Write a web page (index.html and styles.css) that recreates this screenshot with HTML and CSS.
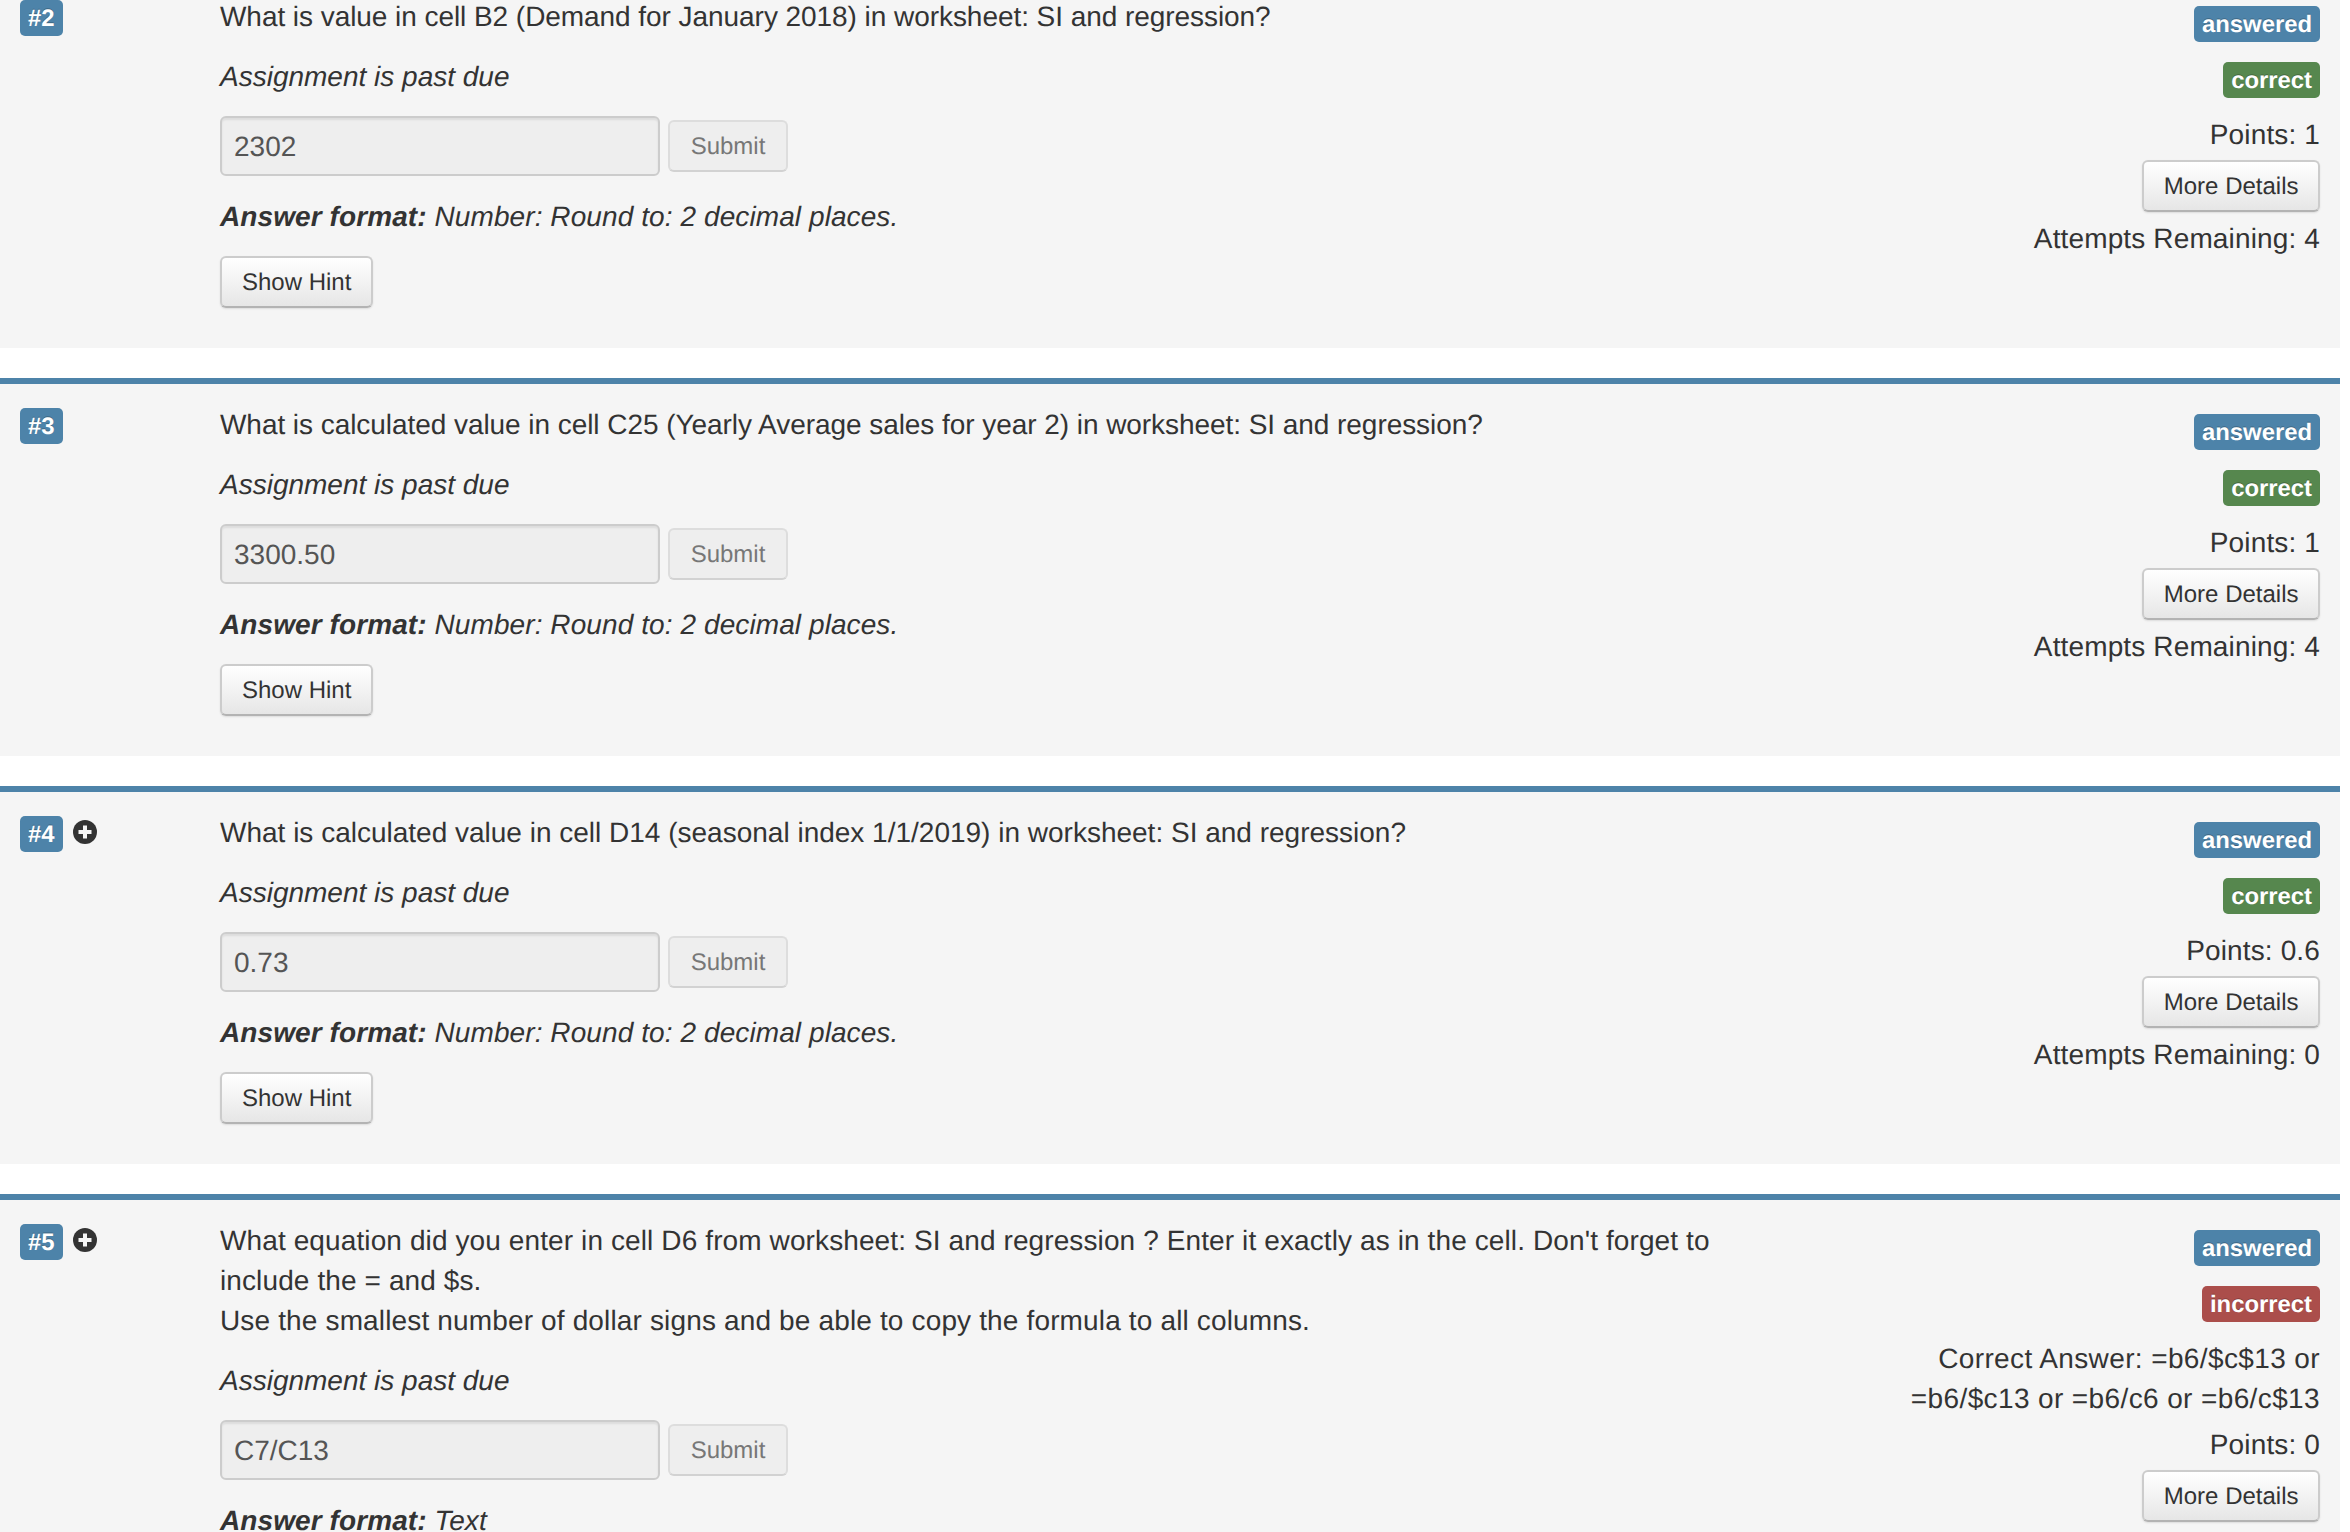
FILE: index.html
```html
<!DOCTYPE html>
<html lang="en">
<head>
<meta charset="utf-8">
<title>Assignment questions</title>
<link rel="stylesheet" href="styles.css">
</head>
<body>
<main class="list">

<section class="q">
  <div class="num"><span class="tag tag-blue">#2</span></div>
  <div class="body">
    <div class="text tight">What is value in cell B2 (Demand for January 2018) in worksheet: SI and regression?</div>
    <div class="due">Assignment is past due</div>
    <div class="answer"><input class="field" type="text" value="2302" disabled><button class="btn btn-off" disabled>Submit</button></div>
    <div class="format"><b>Answer format:</b> Number: Round to: 2 decimal places.</div>
    <div><button class="btn">Show Hint</button></div>
  </div>
  <aside class="side">
    <span class="tag tag-blue">answered</span>
    <span class="tag tag-green">correct</span>
    <div class="line first">Points: 1</div>
    <button class="btn">More Details</button>
    <div class="line">Attempts Remaining: 4</div>
  </aside>
</section>

<section class="q">
  <div class="num"><span class="tag tag-blue">#3</span></div>
  <div class="body">
    <div class="text tight">What is calculated value in cell C25 (Yearly Average sales for year 2) in worksheet: SI and regression?</div>
    <div class="due">Assignment is past due</div>
    <div class="answer"><input class="field" type="text" value="3300.50" disabled><button class="btn btn-off" disabled>Submit</button></div>
    <div class="format"><b>Answer format:</b> Number: Round to: 2 decimal places.</div>
    <div><button class="btn">Show Hint</button></div>
  </div>
  <aside class="side">
    <span class="tag tag-blue">answered</span>
    <span class="tag tag-green">correct</span>
    <div class="line first">Points: 1</div>
    <button class="btn">More Details</button>
    <div class="line">Attempts Remaining: 4</div>
  </aside>
</section>

<section class="q">
  <div class="num"><span class="tag tag-blue">#4</span><svg class="plus" viewBox="0 0 24 24"><circle cx="12" cy="12" r="12"/><path d="M10 5.500h4V10h4.500v4H14v4.500h-4V14H5.500v-4H10z"/></svg></div>
  <div class="body">
    <div class="text">What is calculated value in cell D14 (seasonal index 1/1/2019) in worksheet: SI and regression?</div>
    <div class="due">Assignment is past due</div>
    <div class="answer"><input class="field" type="text" value="0.73" disabled><button class="btn btn-off" disabled>Submit</button></div>
    <div class="format"><b>Answer format:</b> Number: Round to: 2 decimal places.</div>
    <div><button class="btn">Show Hint</button></div>
  </div>
  <aside class="side">
    <span class="tag tag-blue">answered</span>
    <span class="tag tag-green">correct</span>
    <div class="line first">Points: 0.6</div>
    <button class="btn">More Details</button>
    <div class="line">Attempts Remaining: 0</div>
  </aside>
</section>

<section class="q">
  <div class="num"><span class="tag tag-blue">#5</span><svg class="plus" viewBox="0 0 24 24"><circle cx="12" cy="12" r="12"/><path d="M10 5.500h4V10h4.500v4H14v4.500h-4V14H5.500v-4H10z"/></svg></div>
  <div class="body">
    <div class="text wide">What equation did you enter in cell D6 from worksheet: SI and regression ? Enter it exactly as in the cell. Don't forget to include the = and $s.<br><span class="wider">Use the smallest number of dollar signs and be able to copy the formula to all columns.</span></div>
    <div class="due">Assignment is past due</div>
    <div class="answer"><input class="field" type="text" value="C7/C13" disabled><button class="btn btn-off" disabled>Submit</button></div>
    <div class="format"><b>Answer format:</b> Text</div>
  </div>
  <aside class="side">
    <span class="tag tag-blue">answered</span>
    <span class="tag tag-red">incorrect</span>
    <div class="line first formula">Correct Answer: =b6/$c$13 or =b6/$c13 or =b6/c6 or =b6/c$13</div>
    <div class="line">Points: 0</div>
    <button class="btn">More Details</button>
  </aside>
</section>

</main>
</body>
</html>
```
FILE: styles.css
```css
html, body {
  margin: 0;
  height: 1532px;
  overflow: hidden;
  background: #fff;
}
body {
  font-family: "Liberation Sans", Arial, sans-serif;
  font-size: 28px;
  line-height: 40px;
  color: #333;
  text-rendering: geometricPrecision;
}
.list {
  width: 2340px;
  margin-top: -24px;
}
.q {
  display: grid;
  grid-template-columns: 220px 1660px 1fr;
  background: #f5f5f5;
  padding: 20px 20px 40px 0;
  border-top: 6px solid #4d83a9;
  margin-top: 30px;
}
.q:first-child {
  border-top: 0;
  margin-top: 0;
}
.num {
  display: flex;
  align-items: flex-start;
  gap: 10px;
  padding: 4px 0 0 20px;
}
.plus {
  width: 24px;
  height: 24px;
  margin-top: 4px;
  fill: #333;
}
.plus path { fill: #f5f5f5; }
.body {
  display: flex;
  flex-direction: column;
  gap: 20px;
  padding-right: 140px;
}
.text, .due, .format, .line {
  padding-top: 1px;
  margin-bottom: -1px;
}
.tight { letter-spacing: -.055px; }
.wide { letter-spacing: .11px; }
.wider { letter-spacing: .15px; }
.due, .format { font-style: italic; }
.format { letter-spacing: .09px; }
.answer {
  display: flex;
  align-items: center;
  gap: 8px;
}
.field {
  box-sizing: border-box;
  width: 440px;
  height: 60px;
  padding: 1px 12px 0;
  border: 2px solid #ccc;
  border-radius: 6px;
  background: #eee;
  box-shadow: inset 0 2px 2px rgba(0,0,0,.075);
  font: 28px "Liberation Sans", Arial, sans-serif;
  text-rendering: geometricPrecision;
  color: #555;
  -webkit-text-fill-color: #555;
  opacity: 1;
}
.btn {
  box-sizing: border-box;
  height: 52px;
  padding: 1px 20px 0;
  border: 2px solid #ccc;
  border-bottom-color: #b3b3b3;
  border-radius: 6px;
  background: linear-gradient(#fff, #e6e6e6);
  box-shadow: 0 1px 2px rgba(0,0,0,.1);
  font: 24px "Liberation Sans", Arial, sans-serif;
  text-rendering: geometricPrecision;
  color: #333;
}
.btn-off {
  width: 120px;
  padding: 1px 0 0;
  background: #eee;
  box-shadow: none;
  border-color: #ddd;
  border-bottom-color: #d2d2d2;
  color: #777;
}
.side {
  display: flex;
  flex-direction: column;
  align-items: flex-end;
  text-align: right;
  padding-top: 10px;
  min-width: 0;
}
.side .btn { margin-top: 6px; padding: 1px 19.500px 0; }
.side .line { margin-top: 6px; letter-spacing: .14px; }
.side .line.first { margin-top: 16px; }
.side .line.formula { letter-spacing: .38px; }
.side .tag + .tag { margin-top: 20px; }
.tag {
  display: block;
  height: 36px;
  line-height: 38px;
  padding: 0 8px;
  border-radius: 5px;
  font-size: 23.850px;
  font-weight: bold;
  color: #fff;
  text-shadow: 0 -1px 0 rgba(0,0,0,.25);
}
.tag-blue { background: #4d83a9; }
.tag-green { background: #56874e; }
.tag-red { background: #ab4e4b; }
```
